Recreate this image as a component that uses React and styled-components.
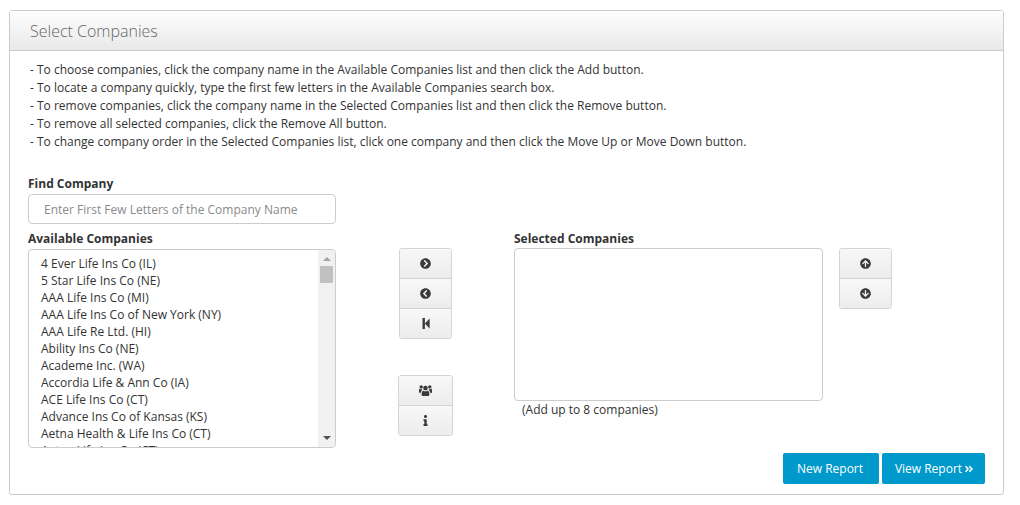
import React from 'react';
import styled, { createGlobalStyle } from 'styled-components';
import {
  FaChevronCircleRight,
  FaChevronCircleLeft,
  FaInfo,
  FaArrowCircleUp,
  FaArrowCircleDown,
  FaAngleDoubleRight,
} from 'react-icons/fa';

const GlobalStyle = createGlobalStyle`
  html, body {
    margin: 0;
    padding: 0;
    background: #fff;
  }
  body {
    font-family: "Open Sans", "Liberation Sans", sans-serif;
    font-size: 12px;
    color: #333;
  }
  * {
    box-sizing: border-box;
  }
`;

const instructions = [
  '- To choose companies, click the company name in the Available Companies list and then click the Add button.',
  '- To locate a company quickly, type the first few letters in the Available Companies search box.',
  '- To remove companies, click the company name in the Selected Companies list and then click the Remove button.',
  '- To remove all selected companies, click the Remove All button.',
  '- To change company order in the Selected Companies list, click one company and then click the Move Up or Move Down button.',
];

const companies = [
  '4 Ever Life Ins Co (IL)',
  '5 Star Life Ins Co (NE)',
  'AAA Life Ins Co (MI)',
  'AAA Life Ins Co of New York (NY)',
  'AAA Life Re Ltd. (HI)',
  'Ability Ins Co (NE)',
  'Academe Inc. (WA)',
  'Accordia Life & Ann Co (IA)',
  'ACE Life Ins Co (CT)',
  'Advance Ins Co of Kansas (KS)',
  'Aetna Health & Life Ins Co (CT)',
  'Aetna Life Ins Co (CT)',
];

const RemoveAllIcon = () => (
  <svg width="8" height="11" viewBox="0 0 8 11" fill="currentColor">
    <path d="M0.5 0h2.4v11H0.5z" />
    <path d="M2.9 5.5L7.6 0.4v10.2z" />
  </svg>
);

const UsersIcon = () => (
  <svg width="13" height="11" viewBox="0 0 13 11" fill="currentColor">
    <circle cx="6.5" cy="3.1" r="2.3" />
    <circle cx="2.2" cy="1.9" r="1.7" />
    <circle cx="10.8" cy="1.9" r="1.7" />
    <path d="M3.2 6.4C3.6 5.7 4.3 5.5 5 6c.9.6 2.1.6 3 0 .7-.5 1.4-.3 1.8.4.4.8.6 2 .6 3.1 0 1-.6 1.5-1.5 1.5H4.1c-.9 0-1.5-.5-1.5-1.5 0-1.1.2-2.3.6-3.1z" />
    <path d="M0 4.6c0-.7.4-1 1-.7.7.4 1.7.4 2.2.1-.1.6.1 1-.4 1.4-.7.6-1.1 1.6-1.2 2.8C.7 8.2 0 7.8 0 7z" />
    <path d="M13 4.6c0-.7-.4-1-1-.7-.7.4-1.7.4-2.2.1.1.6-.1 1 .4 1.4.7.6 1.1 1.6 1.2 2.8 .9 0 1.6-.4 1.6-1.2z" />
  </svg>
);

const App = () => {
  return (
    <Page>
      <GlobalStyle />
      <Panel>
        <PanelHeader>Select Companies</PanelHeader>
        <PanelBody>
          <Instructions>
            {instructions.map((line) => (
              <div key={line}>{line}</div>
            ))}
          </Instructions>

          <FindLabel>Find Company</FindLabel>
          <SearchInput placeholder="Enter First Few Letters of the Company Name" />

          <Columns>
            <ListColumn>
              <Label>Available Companies</Label>
              <AvailableBox>
                <Items>
                  {companies.map((name) => (
                    <Item key={name}>{name}</Item>
                  ))}
                </Items>
                <Scrollbar>
                  <UpArrow />
                  <ScrollTrack>
                    <ScrollThumb />
                  </ScrollTrack>
                  <DownArrow />
                </Scrollbar>
              </AvailableBox>
            </ListColumn>

            <MiddleColumn>
              <ButtonGroup $width={53}>
                <IconButton aria-label="Add"><FaChevronCircleRight /></IconButton>
                <IconButton aria-label="Remove"><FaChevronCircleLeft /></IconButton>
                <IconButton aria-label="Remove All"><RemoveAllIcon /></IconButton>
              </ButtonGroup>
              <ButtonGroup $width={55}>
                <IconButton aria-label="Peer Groups"><UsersIcon /></IconButton>
                <IconButton aria-label="Info"><FaInfo /></IconButton>
              </ButtonGroup>
            </MiddleColumn>

            <ListColumn>
              <Label>Selected Companies</Label>
              <SelectedBox />
              <Hint>(Add up to 8 companies)</Hint>
            </ListColumn>

            <MoveColumn>
              <ButtonGroup $width={53}>
                <IconButton aria-label="Move Up"><FaArrowCircleUp /></IconButton>
                <IconButton aria-label="Move Down"><FaArrowCircleDown /></IconButton>
              </ButtonGroup>
            </MoveColumn>
          </Columns>

          <Actions>
            <ActionButton $width={96} $shift={-2}>New Report</ActionButton>
            <ActionButton $width={103} $shift={2}>
              View Report <FaAngleDoubleRight />
            </ActionButton>
          </Actions>
        </PanelBody>
      </Panel>
    </Page>
  );
};

export default App;

const Page = styled.div`
  padding: 10px 16px 0 9px;
`;

const Panel = styled.div`
  height: 485px;
  border: 1px solid #ccc;
  border-radius: 3px;
  background: #fff;
  box-shadow: 0 1px 1px rgba(0, 0, 0, 0.06);
`;

const PanelHeader = styled.div`
  height: 40px;
  padding: 0 20px;
  font-size: 16px;
  font-weight: 300;
  line-height: 40px;
  color: #666;
  background: linear-gradient(to bottom, #fdfdfd, #e9e9e9);
  border-bottom: 1px solid #ccc;
`;

const PanelBody = styled.div`
  padding: 10px 18px 0;
`;

const Instructions = styled.div`
  padding-left: 2px;
  line-height: 18px;
  color: #333;
`;

const Label = styled.div`
  font-weight: 700;
  font-size: 12px;
  line-height: 17px;
  color: #333;
`;

const FindLabel = styled(Label)`
  margin-top: 24px;
  margin-bottom: 2px;
`;

const SearchInput = styled.input`
  display: block;
  width: 308px;
  height: 30px;
  padding: 0 15px;
  border: 1px solid #ccc;
  border-radius: 4px;
  outline: none;
  font-family: inherit;
  font-size: 12px;
  color: #333;

  &::placeholder {
    color: #8a8a8a;
    opacity: 1;
  }
`;

const Columns = styled.div`
  display: flex;
  align-items: flex-start;
  margin-top: 6px;
`;

const ListColumn = styled.div`
  width: 309px;
  flex: none;
`;

const AvailableBox = styled.div`
  display: flex;
  width: 308px;
  height: 199px;
  margin-top: 2px;
  border: 1px solid #ccc;
  border-radius: 4px;
  overflow: hidden;
`;

const Items = styled.div`
  flex: 1;
  padding: 5px 12px 0;
  overflow: hidden;
`;

const Item = styled.div`
  line-height: 17px;
  white-space: nowrap;
  color: #333;
`;

const Scrollbar = styled.div`
  display: flex;
  flex-direction: column;
  align-items: center;
  width: 17px;
  flex: none;
  background: #f1f1f1;
`;

const UpArrow = styled.div`
  flex: none;
  width: 0;
  height: 0;
  margin: 7px 0 5px;
  border-left: 4px solid transparent;
  border-right: 4px solid transparent;
  border-bottom: 4px solid #a3a3a3;
`;

const ScrollTrack = styled.div`
  flex: 1;
  width: 100%;
`;

const ScrollThumb = styled.div`
  width: 13px;
  height: 17px;
  margin: 0 auto;
  background: #c1c1c1;
`;

const DownArrow = styled.div`
  flex: none;
  width: 0;
  height: 0;
  margin: 5px 0 7px;
  border-left: 4px solid transparent;
  border-right: 4px solid transparent;
  border-top: 4px solid #505050;
`;

const MiddleColumn = styled.div`
  display: flex;
  flex-direction: column;
  align-items: center;
  gap: 36px;
  width: 177px;
  flex: none;
  margin-top: 18px;
`;

const MoveColumn = styled.div`
  flex: none;
  margin-top: 18px;
  margin-left: 16px;
`;

const ButtonGroup = styled.div`
  display: flex;
  flex-direction: column;
  width: ${(props) => props.$width}px;
  border: 1px solid #d4d4d4;
  border-radius: 3px;
  overflow: hidden;
`;

const IconButton = styled.button`
  display: flex;
  align-items: center;
  justify-content: center;
  height: 30px;
  padding: 0;
  border: none;
  border-bottom: 1px solid #d4d4d4;
  background: linear-gradient(to bottom, #f8f8f8, #ececec);
  color: #3a3a3a;
  font-size: 11px;

  &:last-child {
    border-bottom: none;
    height: 29px;
  }
`;

const SelectedBox = styled.div`
  width: 309px;
  height: 153px;
  margin-top: 1px;
  border: 1px solid #ccc;
  border-radius: 4px;
`;

const Hint = styled.div`
  padding-left: 8px;
  line-height: 18px;
  color: #333;
`;

const Actions = styled.div`
  display: flex;
  justify-content: flex-end;
  gap: 3px;
  margin-top: 5px;
`;

const ActionButton = styled.button`
  display: inline-flex;
  align-items: center;
  justify-content: center;
  gap: 2px;
  width: ${(props) => props.$width}px;
  height: 31px;
  padding: 0 ${(props) => (props.$shift < 0 ? -props.$shift : 0)}px 0 ${(props) => (props.$shift > 0 ? props.$shift : 0)}px;
  border: none;
  border-radius: 2px;
  background: #0099cc;
  color: #fff;
  font-family: inherit;
  font-size: 12px;

  svg {
    font-size: 10px;
  }
`;
